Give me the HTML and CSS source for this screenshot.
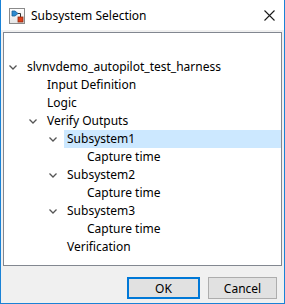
FILE: index.html
```html
<!DOCTYPE html>
<html>
<head>
<meta charset="utf-8">
<link rel="stylesheet" href="styles.css">
</head>
<body>
<div class="window">
  <div class="titlebar">
    <svg class="appicon" width="16" height="16" viewBox="0 0 16 16">
      <defs>
        <linearGradient id="g" x1="0" y1="0" x2="0" y2="1">
          <stop offset="0" stop-color="#ffffff"/>
          <stop offset="1" stop-color="#e4e4e4"/>
        </linearGradient>
      </defs>
      <rect x="0.5" y="0.5" width="15" height="15" fill="url(#g)" stroke="#8a8a8a"/>
      <path d="M3 3 L6 3 L9 5.5 L6 8 L3 8 Z" fill="#2d8bd0" stroke="#1a5f96" stroke-width="0.8"/>
      <path d="M9 5.5 H11.5 V9" fill="none" stroke="#333" stroke-width="1"/>
      <rect x="9" y="9" width="5" height="5" fill="#e0401a" stroke="#8a2a10" stroke-width="0.8"/>
    </svg>
    <span class="title">Subsystem Selection</span>
    <svg class="close" width="11" height="11" viewBox="0 0 11 11">
      <path d="M0.5 0.5 L10.5 10.5 M10.5 0.5 L0.5 10.5" stroke="#1a1a1a" stroke-width="1.1" fill="none"/>
    </svg>
  </div>
  <div class="body">
    <div class="tree">
      <div class="row l0"><span class="tog"><svg class="chev" width="8" height="5" viewBox="0 0 8 5"><path d="M0.5 0.5 L4 4 L7.5 0.5" fill="none" stroke="#555" stroke-width="1.3"/></svg></span><span class="label">slvnvdemo_autopilot_test_harness</span></div>
      <div class="row l1"><span class="tog"></span><span class="label">Input Definition</span></div>
      <div class="row l1"><span class="tog"></span><span class="label">Logic</span></div>
      <div class="row l1"><span class="tog"><svg class="chev" width="8" height="5" viewBox="0 0 8 5"><path d="M0.5 0.5 L4 4 L7.5 0.5" fill="none" stroke="#555" stroke-width="1.3"/></svg></span><span class="label">Verify Outputs</span></div>
      <div class="row l2"><span class="tog"><svg class="chev" width="8" height="5" viewBox="0 0 8 5"><path d="M0.5 0.5 L4 4 L7.5 0.5" fill="none" stroke="#555" stroke-width="1.3"/></svg></span><span class="label selected">Subsystem1</span></div>
      <div class="row l3"><span class="tog"></span><span class="label">Capture time</span></div>
      <div class="row l2"><span class="tog"><svg class="chev" width="8" height="5" viewBox="0 0 8 5"><path d="M0.5 0.5 L4 4 L7.5 0.5" fill="none" stroke="#555" stroke-width="1.3"/></svg></span><span class="label">Subsystem2</span></div>
      <div class="row l3"><span class="tog"></span><span class="label">Capture time</span></div>
      <div class="row l2"><span class="tog"><svg class="chev" width="8" height="5" viewBox="0 0 8 5"><path d="M0.5 0.5 L4 4 L7.5 0.5" fill="none" stroke="#555" stroke-width="1.3"/></svg></span><span class="label">Subsystem3</span></div>
      <div class="row l3"><span class="tog"></span><span class="label">Capture time</span></div>
      <div class="row l2"><span class="tog"></span><span class="label">Verification</span></div>
    </div>
    <div class="footer">
      <button class="btn default">OK</button>
      <button class="btn">Cancel</button>
    </div>
  </div>
</div>
</body>
</html>
```
FILE: styles.css
```css
html, body {
  margin: 0;
  padding: 0;
  background: #ffffff;
}
.window {
  width: 285px;
  height: 304px;
  box-sizing: border-box;
  border: 1px solid #1a82d6;
  border-top: none;
  display: flex;
  flex-direction: column;
  font-family: "Noto Sans", "Open Sans", sans-serif;
  font-size: 12px;
  color: #000;
  background: #f0f0f0;
}
.titlebar {
  height: 30px;
  flex: none;
  background: #ffffff;
  display: flex;
  align-items: center;
  padding-left: 8px;
}
.appicon {
  flex: none;
  margin-top: 2px;
}
.title {
  margin-left: 6px;
  flex: 1;
  margin-top: 1px;
}
.close {
  flex: none;
  margin-right: 9px;
  margin-top: 1px;
}
.body {
  flex: 1;
  display: flex;
  flex-direction: column;
  padding: 2px 2px 0 2px;
}
.tree {
  height: 234px;
  box-sizing: border-box;
  border: 1px solid #828790;
  background: #ffffff;
  padding-top: 25px;
}
.row {
  display: flex;
  height: 18px;
  line-height: 18px;
  align-items: center;
}
.l0 { padding-left: 0; }
.l1 { padding-left: 20px; }
.l2 { padding-left: 40px; }
.l3 { padding-left: 60px; }
.tog {
  width: 20px;
  flex: none;
  display: flex;
  align-items: center;
}
.chev {
  margin-left: 5px;
}
.label {
  flex: 1;
  padding-left: 3px;
  height: 18px;
  white-space: nowrap;
}
.selected {
  background: #cce8ff;
}
.footer {
  flex: 1;
  display: flex;
  justify-content: flex-end;
  align-items: flex-start;
  padding-top: 11px;
  padding-right: 5px;
  gap: 8px;
}
.btn {
  height: 22px;
  box-sizing: border-box;
  font-family: "Noto Sans", "Open Sans", sans-serif;
  font-size: 12px;
  color: #000;
  background: #e1e1e1;
  border: 1px solid #adadad;
  padding: 0;
  margin: 0;
  width: 69px;
}
.btn.default {
  width: 73px;
  border: 2px solid #0078d7;
}
```
